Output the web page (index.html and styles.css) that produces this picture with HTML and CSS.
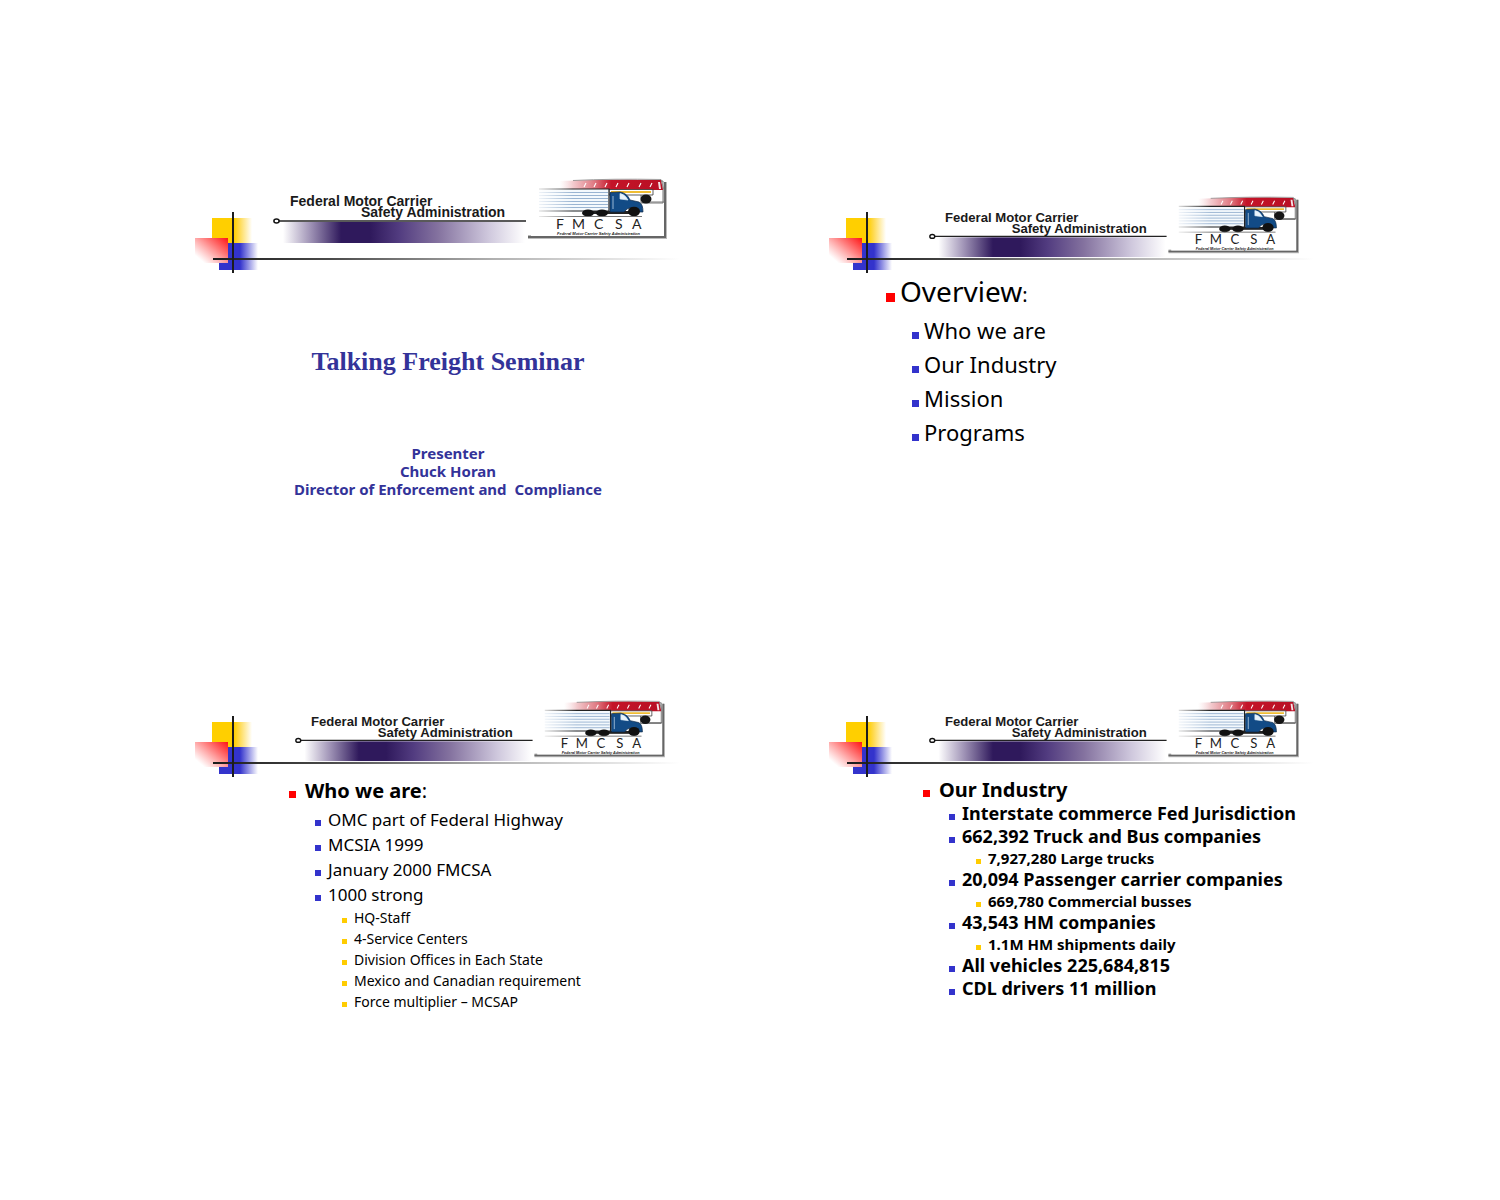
FILE: index.html
```html
<!DOCTYPE html>
<html lang="en">
<head>
<meta charset="utf-8">
<meta name="viewport" content="width=device-width, initial-scale=1">
<title>Talking Freight Seminar</title>
<link rel="stylesheet" href="styles.css">
</head>
<body>
<svg class="defs" aria-hidden="true">
  <defs>
    <linearGradient id="yellow"><stop offset="0.55" stop-color="#ffcf00"/><stop offset="0.68" stop-color="#ffd94a"/><stop offset="1" stop-color="#fff"/></linearGradient>
    <linearGradient id="blue"><stop offset="0.4" stop-color="#3333cc"/><stop offset="1" stop-color="#fff"/></linearGradient>
    <linearGradient id="red" x1="1" y1="0" x2="0.1" y2="0.8"><stop offset="0" stop-color="#ff1414"/><stop offset="0.45" stop-color="#ff8080"/><stop offset="1" stop-color="#fff" stop-opacity="0.9"/></linearGradient>
    <linearGradient id="rule"><stop offset="0" stop-color="#1c1c1c"/><stop offset="0.25" stop-color="#4a4a4a"/><stop offset="0.6" stop-color="#b0b0b0"/><stop offset="1" stop-color="#fff"/></linearGradient>
    <linearGradient id="bar"><stop offset="0" stop-color="#fff"/><stop offset="0.11" stop-color="#a296b8"/><stop offset="0.24" stop-color="#2f195c"/><stop offset="0.36" stop-color="#2f195c"/><stop offset="0.48" stop-color="#523c80"/><stop offset="0.64" stop-color="#84729f"/><stop offset="0.85" stop-color="#cfc8dd"/><stop offset="1" stop-color="#fff"/></linearGradient>
    <linearGradient id="bus"><stop offset="0.1" stop-color="#fff"/><stop offset="0.4" stop-color="#e07a83"/><stop offset="0.55" stop-color="#c41428"/><stop offset="1" stop-color="#b80f24"/></linearGradient>
    <linearGradient id="fade"><stop offset="0" stop-color="#fff"/><stop offset="0.4" stop-color="#fff" stop-opacity="0"/></linearGradient>
    <symbol id="ornament" viewBox="0 0 485 61">
      <rect x="17" y="6" width="40" height="26" fill="url(#yellow)"/>
      <rect x="24" y="50" width="12" height="8" fill="#3333cc"/>
      <rect x="33" y="31" width="30" height="27" fill="url(#blue)"/>
      <rect x="0" y="26" width="33" height="25" fill="url(#red)"/>
      <rect x="18" y="46" width="467" height="2" fill="url(#rule)"/>
      <rect x="37" y="0" width="2" height="61" fill="#1c1c1c"/>
    </symbol>
    <symbol id="banner" viewBox="0 0 394 66">
      <rect x="10" y="44" width="242" height="21" fill="url(#bar)"/>
      <path d="M6 43H253" stroke="#222" stroke-width="1.4"/>
      <ellipse cx="3.500" cy="43" rx="2.600" ry="2" fill="#fff" stroke="#111" stroke-width="1.500"/>
      <text class="agency" x="17" y="28">Federal Motor Carrier</text>
      <text class="agency" x="88" y="39">Safety Administration</text>
      <path d="M255 59H392V4" fill="none" stroke="#bbb" stroke-width="4"/>
      <path d="M255 59H392V4" fill="none" stroke="#666" stroke-width="2"/>
      <path d="M253 2H391V58H258Z" fill="#fff"/>
      <path d="M372 3H390V25H368V12Z" fill="#fff" stroke="#555" stroke-width=".8"/>
      <path d="M285 3Q340 1 388 2L390 12H275Z" fill="url(#bus)"/>
      <path d="M311 9l2-4M321 9l2-4M332 9l2-4M343 9l2-4M354 9l2-4M366 9l2-4M377 9l2-4" stroke="#fff" stroke-width="1.100"/>
      <path d="M385 4l2 0 1 7h-2z" fill="#f4e4e6"/>
      <path d="M300 2.500Q340 .5 388 1.500L391 12V24" fill="none" stroke="#777" stroke-width=".7"/>
      <path d="M336 11.500H380V17H336Z" fill="#fff" stroke="#333" stroke-width=".8"/>
      <path d="M338 13H378V15H338Z" fill="#f0bd32"/>
      <path d="M374 24H391" stroke="#777"/>
      <ellipse cx="373" cy="21" rx="5.500" ry="4.500" fill="#151515"/>
      <rect x="266" y="11" width="70" height="23" fill="#f4f9fd"/>
      <path d="M266 14.500H335M266 17.500H335M266 20.500H335M266 23.500H335M266 26.500H335M266 29.500H335" stroke="#8faccd" stroke-width=".9"/>
      <path d="M266 11H336V33H266" fill="none" stroke="#222" stroke-width="1.200"/>
      <rect x="310" y="33" width="50" height="3" fill="#222"/>
      <path d="M337 34V14.500L347 14Q354 15 357 22L366 24Q370 26 370 34H361Q360 28 354 31L351 34Z" fill="#124b86" stroke="#0d2745" stroke-width=".7"/>
      <path d="M347 15.500Q352 16 355 22L347 21ZM340 18V31" fill="#e9f4fc" stroke="#d4e6f5" stroke-width=".7"/>
      <ellipse cx="315" cy="35" rx="6" ry="3.500" fill="#111"/>
      <ellipse cx="329" cy="35" rx="6" ry="3.500" fill="#111"/>
      <ellipse cx="361" cy="33.500" rx="6" ry="4.800" fill="#111"/>
      <path d="M266 38.500H369" stroke="#666" stroke-width=".9"/>
      <rect x="260" y="1" width="100" height="39" fill="url(#fade)"/>
      <text class="acronym" y="51" x="283 299 321 342 359">FMCSA</text>
      <text class="fullname" x="284" y="57">Federal Motor Carrier Safety Administration</text>
    </symbol>
  </defs>
</svg>

<main class="handout">
  <section class="slide">
    <header class="masthead masthead-title">
      <svg class="ornament" viewBox="0 0 485 61" aria-hidden="true"><use href="#ornament"/></svg>
      <svg class="banner" viewBox="0 0 394 66" role="img" aria-label="Federal Motor Carrier Safety Administration"><use href="#banner"/></svg>
    </header>
    <div class="title-body">
      <h1>Talking Freight Seminar</h1>
      <p>Presenter<br>Chuck Horan<br>Director of Enforcement and&nbsp; Compliance</p>
    </div>
  </section>

  <section class="slide">
    <header class="masthead">
      <svg class="ornament" viewBox="0 0 485 61" aria-hidden="true"><use href="#ornament"/></svg>
      <svg class="banner" viewBox="0 0 394 66" role="img" aria-label="Federal Motor Carrier Safety Administration"><use href="#banner"/></svg>
    </header>
    <div class="outline outline-large">
      <h2>Overview<small>:</small></h2>
      <ul>
        <li>Who we are</li>
        <li>Our Industry</li>
        <li>Mission</li>
        <li>Programs</li>
      </ul>
    </div>
  </section>

  <section class="slide">
    <header class="masthead">
      <svg class="ornament" viewBox="0 0 485 61" aria-hidden="true"><use href="#ornament"/></svg>
      <svg class="banner" viewBox="0 0 394 66" role="img" aria-label="Federal Motor Carrier Safety Administration"><use href="#banner"/></svg>
    </header>
    <div class="outline outline-who">
      <h2><b>Who we are</b>:</h2>
      <ul>
        <li>OMC part of Federal Highway</li>
        <li>MCSIA 1999</li>
        <li>January 2000 FMCSA</li>
        <li>1000 strong</li>
        <li class="nested">
          <ul>
            <li>HQ-Staff</li>
            <li>4-Service Centers</li>
            <li>Division Offices in Each State</li>
            <li>Mexico and Canadian requirement</li>
            <li>Force multiplier – MCSAP</li>
          </ul>
        </li>
      </ul>
    </div>
  </section>

  <section class="slide">
    <header class="masthead">
      <svg class="ornament" viewBox="0 0 485 61" aria-hidden="true"><use href="#ornament"/></svg>
      <svg class="banner" viewBox="0 0 394 66" role="img" aria-label="Federal Motor Carrier Safety Administration"><use href="#banner"/></svg>
    </header>
    <div class="outline outline-industry">
      <h2><b>Our Industry</b></h2>
      <ul>
        <li>Interstate commerce Fed Jurisdiction</li>
        <li>662,392 Truck and Bus companies</li>
        <li class="nested"><ul><li>7,927,280 Large trucks</li></ul></li>
        <li>20,094 Passenger carrier companies</li>
        <li class="nested"><ul><li>669,780 Commercial busses</li></ul></li>
        <li>43,543 HM companies</li>
        <li class="nested"><ul><li>1.1M HM shipments daily</li></ul></li>
        <li>All vehicles 225,684,815</li>
        <li>CDL drivers 11 million</li>
      </ul>
    </div>
  </section>
</main>
</body>
</html>
```
FILE: styles.css
```css
* {
  box-sizing: border-box;
}

body {
  margin: 0;
  background: #fff;
  color: #000;
  font-family: "Noto Sans", "Open Sans", sans-serif;
}

h1, h2, p, ul {
  margin: 0;
  padding: 0;
}

.defs {
  display: block;
  width: 0;
  height: 0;
}

.handout {
  display: grid;
  grid-template-columns: 1fr 1fr;
  column-gap: 123px;
  row-gap: 124px;
  padding: 175px 160px 124px 195px;
}

.slide {
  min-width: 0;
  min-height: 380px;
}

/* The banner lies over the ornament in a shared grid cell. */
.masthead {
  display: grid;
  height: 98px;
}

.ornament,
.banner {
  grid-area: 1 / 1;
  align-self: end;
}

.ornament {
  width: 485px;
  height: 61px;
}

.banner {
  width: 370px;
  height: 62px;
  margin: 0 0 15px 100px;
}

.masthead-title .banner {
  width: 394px;
  height: 66px;
  margin: 0 0 29px 78px;
}

.agency {
  font: bold 14px "Liberation Sans", Arial, sans-serif;
  fill: #1a1a1a;
}

.acronym {
  font: 14px Lato, sans-serif;
  fill: #222;
}

.fullname {
  font: italic bold 4px "Liberation Sans", Arial, sans-serif;
  fill: #222;
}

.title-body {
  padding: 72px 5px 0 0;
  color: #333399;
  text-align: center;
}

.title-body h1 {
  font: bold 26px/34px "Liberation Serif", "Times New Roman", serif;
}

.title-body p {
  margin-top: 65px;
  font-size: 15px;
  font-weight: bold;
  line-height: 18px;
}

.outline ul {
  list-style: none;
}

.outline h2,
.outline li:not(.nested) {
  display: flex;
  align-items: baseline;
  white-space: pre;
}

.outline h2 {
  font-weight: normal;
}

.outline h2::before,
.outline li:not(.nested)::before {
  content: "";
  flex: none;
  width: 6px;
  height: 6px;
  margin-right: 7px;
  background: #3333cc;
}

.outline h2::before {
  width: 7px;
  height: 7px;
  margin-right: 9px;
  background: #ff0000;
}

.outline .nested li::before {
  width: 5px;
  height: 5px;
  background: #ffcc00;
}

.outline > ul {
  padding-left: 26px;
}

.nested > ul {
  padding-left: 27px;
}

.outline-large {
  padding: 0 0 0 57px;
}

.outline-large h2 {
  font-size: 28px;
  line-height: 36px;
}

.outline-large small {
  font-size: 20px;
}

.outline-large h2::before {
  width: 9px;
  height: 9px;
  margin-right: 5px;
}

.outline-large li {
  font-size: 22px;
  line-height: 34px;
}

.outline-large li:not(.nested)::before {
  width: 7px;
  height: 7px;
  margin-right: 5px;
}

.outline-who,
.outline-industry {
  padding: 0 0 0 94px;
}

.outline-who h2 {
  font-size: 20px;
  line-height: 28px;
}

.outline-who > ul {
  padding-top: 2px;
}

.outline-who li {
  font-size: 17px;
  line-height: 25px;
}

.outline-who .nested li {
  font-size: 14px;
  line-height: 21px;
}

.outline-industry h2 {
  font-size: 20px;
  line-height: 25px;
}

.outline-industry li {
  font-size: 18px;
  font-weight: bold;
  line-height: 23px;
}

.outline-industry .nested li {
  font-size: 15px;
  line-height: 20px;
}
```
